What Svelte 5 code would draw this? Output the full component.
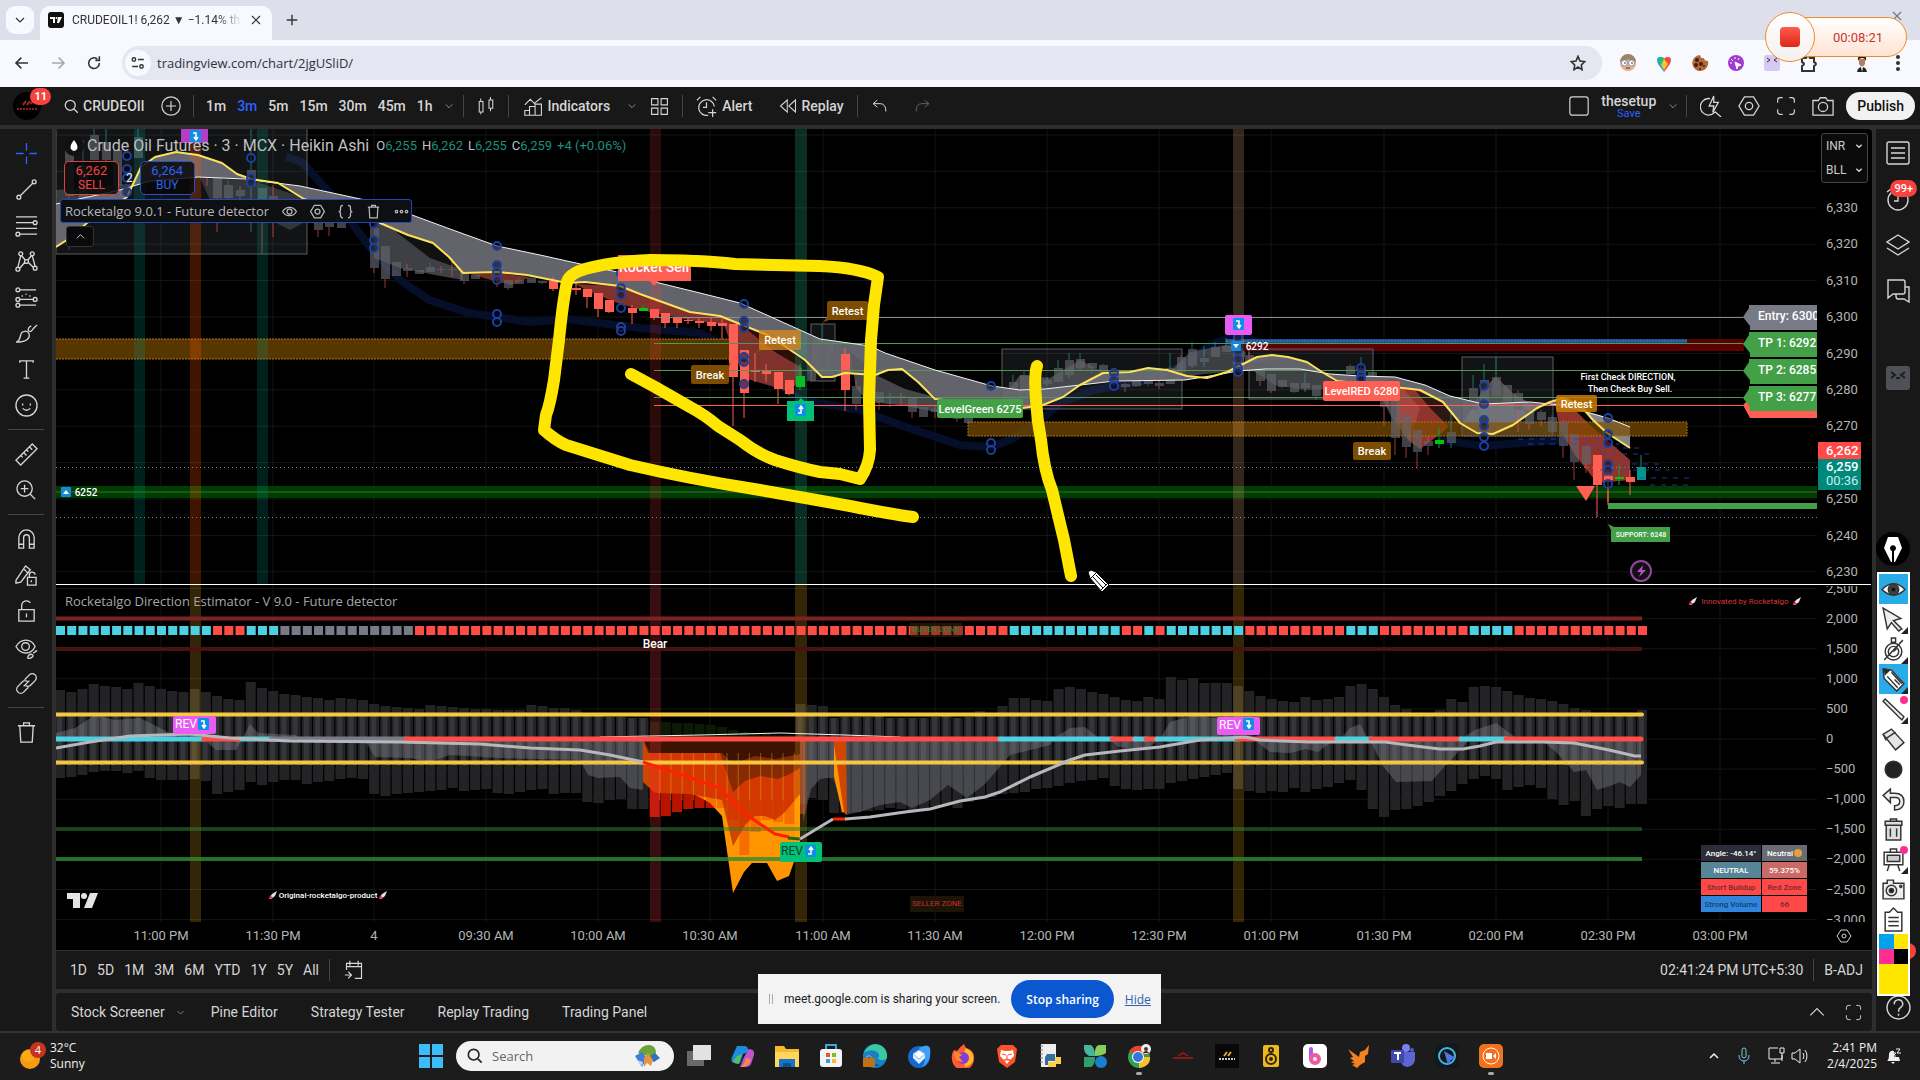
<script>
	const PITCH = 11.22;
	const barX = (k) => 60 + k * PITCH;

	const intervals = ['1m', '3m', '5m', '15m', '30m', '45m', '1h'];
	const ranges = ['1D', '5D', '1M', '3M', '6M', 'YTD', '1Y', '5Y', 'All'];
	const panels = ['Pine Editor', 'Strategy Tester', 'Replay Trading', 'Trading Panel'];

	// 24x24 outline icons
	const icons = {
		cross: 'M12 1v8M12 15v8M1 12h8M15 12h8',
		trend: 'M6 18L18 6M4 20m-2 0a2 2 0 1 0 4 0a2 2 0 1 0-4 0M20 4m-2 0a2 2 0 1 0 4 0a2 2 0 1 0-4 0',
		fib: 'M1 3h22M1 9h18M1 15h22M5 21h18M21 9m-2 0a2 2 0 1 0 4 0a2 2 0 1 0-4 0M3 21m-2 0a2 2 0 1 0 4 0a2 2 0 1 0-4 0',
		pattern: 'M3 18L6 6M7 6L11 11M13 11L17 6M18 6L21 17M5 19L10 13M14 13L19 18M6 4m-2 0a2 2 0 1 0 4 0a2 2 0 1 0-4 0M18 4m-2 0a2 2 0 1 0 4 0a2 2 0 1 0-4 0M3 20m-2 0a2 2 0 1 0 4 0a2 2 0 1 0-4 0M21 19m-2 0a2 2 0 1 0 4 0a2 2 0 1 0-4 0M12 12m-2 0a2 2 0 1 0 4 0a2 2 0 1 0-4 0',
		forecast: 'M5 4h17M5 14h14M5 20h17M3 4m-2 0a2 2 0 1 0 4 0a2 2 0 1 0-4 0M3 14m-2 0a2 2 0 1 0 4 0a2 2 0 1 0-4 0M3 20m-2 0a2 2 0 1 0 4 0a2 2 0 1 0-4 0M21 14m-2 0a2 2 0 1 0 4 0a2 2 0 1 0-4 0M7 11l1-1M11 9l1-1M15 10l1 1',
		brush: 'M1 21C7 21 4 10 9 10C14 8 17 14 13 18C10 21 6 21 1 21zM14 9C16 11 18 9 19 7L23 3M14 9C13 6 15 5 17 4',
		text: 'M5 5V3h14v2M12 3v18M9 21h6',
		smile: 'M12 12m-11 0a11 11 0 1 0 22 0a11 11 0 1 0-22 0M8 10v2M16 10v2M8 15q4 4 8 0',
		ruler: 'M1 18L18 1L23 6L6 23zM6 13l2 2M9 10l3 3M12 7l2 2M15 4l3 3',
		zoom: 'M10 10m-8 0a8 8 0 1 0 16 0a8 8 0 1 0-16 0M16 16l5 5M10 6v8M6 10h8',
		magnet: 'M4 21V10a8 8 0 0 1 16 0V21h-5V10a3 3 0 0 0-6 0V21zM4 17h5M15 17h5',
		penlock: 'M1 17L11 2L16 6L6 19L1 20zM9 5l4 4M13 14h9v8h-9zM15 14v-2a3 3 0 0 1 6-1M17 17v2',
		lock: 'M4 10h16v12H4zM7 10V6a5 5 0 0 1 9-3M12 14v4',
		eye: 'M1 11C6 2 17 2 21 11C17 20 6 20 1 11zM11 11m-4 0a4 4 0 1 0 8 0a4 4 0 1 0-8 0M13 23q1-4 4-4q3 1 1 3q-2 2-5 1M19 18l4-3',
		view: 'M1 12C6 3 18 3 23 12C18 21 6 21 1 12zM12 12m-4 0a4 4 0 1 0 8 0a4 4 0 1 0-8 0',
		link: 'M10 8L15 3a4 4 0 0 1 6 6L16 14a4 4 0 0 1-5 0M14 16L9 21a4 4 0 0 1-6-6L8 10a4 4 0 0 1 5 0M9 15l6-6',
		trash: 'M3 5h18M9 5V2h6v3M5 5l1 17h12l1-17',
		search: 'M10 10m-8 0a8 8 0 1 0 16 0a8 8 0 1 0-16 0M16 16l6 6',
		plus: 'M12 12m-11 0a11 11 0 1 0 22 0a11 11 0 1 0-22 0M12 6v12M6 12h12',
		candles: 'M3 6h5v14H3zM5 2v4M5 20v3M16 4h5v11h-5zM18 0v4M18 15v4',
		indicators: 'M1 10L8 3L13 8L22 1M1 23v-6h6v6zM7 23V12h7v11zM14 23V15M14 9h8v14h-8z',
		grid: 'M2 2h8v8H2zM14 2h8v8h-8zM2 14h8v8H2zM14 14h8v8h-8z',
		alarm: 'M14 22A9 9 0 1 1 21 12M12 7v6H8M1 5l4-4M19 1l4 4M19 15v9M14 19h9',
		replay: 'M11 4L2 12L11 20zM22 4L13 12L22 20z',
		undo: 'M9 3L3 8L9 13M3 8h10q8 0 8 11',
		redo: 'M15 3L21 8L15 13M21 8H11Q3 8 3 19',
		square: 'M4 1h16q3 0 3 3v16q0 3-3 3H4q-3 0-3-3V4q0-3 3-3z',
		quick: 'M16 19A9 9 0 1 1 11 4M16 18l7 6M15 1L10 12h5l-1 7L20 8h-5z',
		gear: 'M7 2h10l6 10l-6 10H7L1 12zM12 12m-4 0a4 4 0 1 0 8 0a4 4 0 1 0-8 0',
		full: 'M2 8V5q0-3 3-3h3M16 2h3q3 0 3 3v3M22 16v3q0 3-3 3h-3M8 22H5q-3 0-3-3v-3',
		camera: 'M1 6h6l2-3h6l2 3h6v16H1zM12 13m-5 0a5 5 0 1 0 10 0a5 5 0 1 0-10 0',
		down: 'M4 8l8 8l8-8',
		up: 'M4 16l8-8l8 8',
		code: 'M8 2Q4 2 4 6v3q0 3-3 3q3 0 3 3v3q0 4 4 4M16 2q4 0 4 4v3q0 3 3 3q-3 0-3 3v3q0 4-4 4',
		more: 'M4 12m-2 0a2 2 0 1 0 4 0a2 2 0 1 0-4 0M12 12m-2 0a2 2 0 1 0 4 0a2 2 0 1 0-4 0M20 12m-2 0a2 2 0 1 0 4 0a2 2 0 1 0-4 0',
		list: 'M3 1h18q2 0 2 2v18q0 2-2 2H3q-2 0-2-2V3q0-2 2-2zM5 7h14M5 12h14M5 17h14',
		clock: 'M12 13m-10 0a10 10 0 1 0 20 0a10 10 0 1 0-20 0M12 8v6H8M1 5l4-3',
		layers: 'M12 2L23 9L12 16L1 9zM1 15l11 7l11-7',
		chat: 'M2 1h15q2 0 2 2v10q0 2-2 2H7l-5 4zM19 8h4v15l-5-3h-6q-2 0-2-3v-2',
		calendar: 'M3 8h18M7 1v6M17 1v6M3 12V4h18v18H13M1 18h8M5 14l4 4l-4 4',
		help: 'M12 12m-11 0a11 11 0 1 0 22 0a11 11 0 1 0-22 0M8 9a4 4 0 1 1 6 3q-2 1-2 4M12 18v2',
		back: 'M21 12H3M11 4L3 12L11 20',
		forward: 'M3 12h18M13 4l8 8l-8 8',
		reload: 'M20 12a8 8 0 1 1-3-6M20 2v6h-6',
		star: 'M12 2l3 7l7 1l-5 5l1 7l-6-4l-6 4l1-7l-5-5l7-1z',
		close: 'M4 4l16 16M20 4L4 20',
		add: 'M12 3v18M3 12h18',
		tune: 'M2 6a3 3 0 1 0 6 0a3 3 0 1 0-6 0M12 6h10M2 18h10M15 18a3 3 0 1 0 6 0a3 3 0 1 0-6 0'
	};
	const drawTools = [
		['cross', 'trend', 'fib', 'pattern', 'forecast', 'brush', 'text', 'smile'],
		['ruler', 'zoom'],
		['magnet', 'penlock', 'lock', 'eye', 'link'],
		['trash']
	];
	const sideTools = ['list', 'clock', 'layers', 'chat'];

	const prices = [6330, 6320, 6310, 6300, 6290, 6280, 6270, 6250, 6240, 6230];
	const priceY = (p) => 207 + ((6330 - p) / 10) * 36.4;
	const rows = Array.from({ length: 13 }, (_, i) => 135 + i * 36.4);
	const levels = [2500, 2000, 1500, 1000, 500, 0, -500, -1000, -1500, -2000, -2500, -3000];
	const levelY = (v) => 739 - v * 0.0602;
	const times = [
		[161, '11:00 PM'], [273, '11:30 PM'], [374, '4'], [486, '09:30 AM'], [598, '10:00 AM'],
		[710, '10:30 AM'], [823, '11:00 AM'], [935, '11:30 AM'], [1047, '12:00 PM'], [1159, '12:30 PM'],
		[1271, '01:00 PM'], [1384, '01:30 PM'], [1496, '02:00 PM'], [1608, '02:30 PM'], [1720, '03:00 PM']
	];
	const fmt = (n) => (n < 0 ? '−' : '') + Math.abs(n).toLocaleString('en-US');

	// trend strip: colour and number of bars
	const runs = [
		['c', 14], ['r', 3], ['c', 3], ['g', 12], ['r', 53], ['c', 10], ['r', 2], ['c', 1], ['r', 1],
		['c', 7], ['r', 9], ['c', 3], ['r', 8], ['c', 4], ['r', 12]
	];
	const tone = { c: '#4dd0e1', r: '#ff4d45', g: '#787b86' };
	const strip = runs.flatMap(([c, n]) => Array(n).fill(tone[c]));
	const zero = [
		[56, 204, 'c'], [238, 271, 'c'], [271, 406, 'g'], [204, 238, 'r'], [406, 1000, 'r'],
		[1000, 1112, 'c'], [1112, 1135, 'r'], [1135, 1146, 'c'], [1146, 1157, 'r'], [1157, 1237, 'c'],
		[1237, 1337, 'r'], [1337, 1371, 'c'], [1371, 1461, 'r'], [1461, 1506, 'c'], [1506, 1641, 'r']
	];

	const tops = [
		690, 692, 689, 684, 686, 687, 689, 683, 686, 689, 691, 692, 689, 692, 696, 699, 700, 682, 688, 691,
		694, 695, 697, 698, 700, 698, 699, 700, 704, 706, 707, 708, 709, 705, 706, 707, 708, 709, 709, 710,
		710, 710, 705, 706, 708, 708, 710, 715, 716, 717, 717, 718, 718, 722, 722, 723, 723, 724, 725, 727,
		730, 732, 733, 734, 735, 735, 704, 705, 706, 718, 717, 717, 717, 716, 718, 718, 718, 718, 717, 716,
		718, 717, 711, 714, 706, 698, 698, 700, 701, 689, 687, 689, 692, 694, 697, 700, 701, 697, 699, 677,
		680, 678, 683, 683, 683, 686, 691, 696, 699, 701, 702, 697, 700, 699, 697, 686, 684, 689, 697, 705,
		709, 713, 713, 710, 699, 702, 687, 686, 687, 691, 695, 698, 699, 701, 704, 708, 710, 713, 713, 713,
		713, 710
	];
	const bottoms = [
		778, 777, 775, 772, 771, 771, 773, 771, 778, 780, 780, 780, 779, 781, 794, 792, 790, 782, 785, 782,
		780, 780, 784, 782, 781, 779, 778, 779, 794, 796, 794, 793, 792, 791, 790, 788, 791, 790, 789, 793,
		794, 792, 790, 789, 794, 793, 793, 802, 803, 800, 799, 809, 809, 817, 816, 812, 809, 808, 808, 808,
		820, 855, 832, 820, 822, 824, 804, 798, 800, 813, 813, 812, 811, 810, 808, 809, 810, 810, 806, 804,
		808, 802, 799, 797, 794, 793, 792, 789, 788, 786, 783, 781, 780, 778, 786, 789, 790, 789, 789, 783,
		781, 779, 777, 775, 773, 789, 791, 793, 791, 792, 788, 792, 789, 787, 783, 780, 790, 809, 817, 810,
		809, 806, 802, 796, 791, 784, 779, 776, 779, 790, 787, 785, 788, 799, 805, 801, 816, 809, 806, 808,
		804, 804
	];
	const isHot = (k) => k >= 53 && k <= 65;

	// x, body top, body bottom, wick top, wick bottom, colour
	const candles = [
		[69, 150, 196, 150, 250, 'g'], [83, 165, 202, 140, 202, 'g'], [94, 135, 160, 129, 160, 't'], [106, 142, 160, 129, 166, 't'],
		[117, 150, 186, 150, 198, 'g'], [138, 137, 158, 129, 158, 't'], [207, 172, 178, 172, 186, 'x'], [217, 175, 198, 175, 232, 'x'],
		[228, 185, 198, 180, 200, 'g'], [240, 190, 196, 186, 200, 't'], [251, 170, 186, 129, 232, 't'], [262, 188, 200, 188, 254, 'x'],
		[273, 196, 204, 185, 237, 'x'], [318, 222, 230, 222, 237, 'x'], [329, 222, 227, 222, 236, 'x'], [341, 218, 228, 216, 228, 'g'],
		[374, 228, 268, 225, 273, 'x'], [385, 246, 279, 246, 288, 'x'], [396, 262, 276, 262, 276, 'g'], [407, 268, 271, 264, 277, 'x'],
		[419, 270, 274, 270, 274, 'g'], [430, 267, 272, 262, 272, 'g'], [441, 269, 270, 266, 273, 'x'], [452, 269, 270, 260, 277, 'x'],
		[464, 272, 281, 270, 284, 'x'], [475, 275, 279, 275, 279, 'g'], [497, 278, 280, 276, 287, 'x'], [508, 280, 288, 280, 290, 'x'],
		[519, 280, 284, 278, 284, 'g'], [531, 278, 283, 272, 283, 't'], [542, 281, 283, 281, 284, 'x'],
		[553, 281, 289, 277, 291, 'r'], [576, 288, 290, 283, 295, 'r'], [587, 289, 297, 289, 308, 'r'], [598, 293, 309, 293, 317, 'r'],
		[609, 300, 312, 300, 313, 'r'], [632, 308, 313, 305, 324, 'r'], [643, 308, 311, 305, 311, 'n'], [654, 309, 318, 309, 320, 'r'],
		[665, 313, 323, 313, 328, 'r'], [677, 318, 323, 318, 328, 'r'], [688, 320, 321, 317, 324, 'r'], [699, 321, 323, 318, 328, 'r'],
		[711, 322, 326, 318, 331, 'r'], [722, 323, 326, 319, 339, 'r'], [733, 324, 377, 324, 426, 'r'], [744, 350, 393, 350, 418, 'r'],
		[755, 371, 372, 353, 382, 'r'], [766, 371, 374, 364, 382, 'r'], [778, 372, 389, 372, 404, 'r'], [789, 380, 394, 380, 395, 'r'],
		[800, 376, 387, 364, 390, 'n'], [811, 360, 381, 350, 382, 'g'], [822, 344, 368, 324, 368, 't'], [833, 350, 370, 345, 372, 'g'],
		[845, 354, 390, 348, 411, 'r'], [856, 386, 404, 380, 410, 'x'], [879, 392, 402, 392, 410, 'x'], [890, 396, 398, 393, 407, 't'],
		[901, 396, 398, 393, 404, 'x'], [912, 398, 412, 398, 418, 'x'], [923, 407, 417, 407, 417, 'g'], [935, 409, 412, 405, 418, 'x'],
		[957, 416, 419, 415, 422, 'x'], [968, 417, 423, 417, 423, 'g'], [1013, 382, 398, 375, 400, 't'], [1024, 375, 392, 370, 395, 'g'],
		[1047, 380, 384, 377, 386, 't'], [1058, 368, 382, 360, 382, 't'], [1069, 360, 375, 353, 378, 't'], [1080, 359, 368, 353, 370, 't'],
		[1092, 363, 368, 363, 374, 'g'], [1103, 365, 372, 364, 375, 't'], [1114, 374, 382, 374, 386, 'g'], [1125, 384, 387, 383, 392, 'x'],
		[1136, 380, 386, 380, 387, 'g'], [1148, 381, 384, 380, 386, 'g'], [1159, 383, 386, 381, 389, 'x'], [1170, 368, 384, 353, 384, 't'],
		[1181, 357, 372, 355, 376, 'g'], [1192, 349, 366, 342, 368, 't'], [1204, 358, 362, 346, 367, 't'], [1215, 347, 357, 342, 357, 't'],
		[1226, 346, 352, 338, 352, 't'], [1249, 355, 366, 352, 368, 'x'], [1260, 368, 381, 368, 386, 'x'], [1271, 374, 391, 374, 393, 'x'],
		[1282, 380, 387, 380, 388, 'x'], [1294, 383, 392, 383, 393, 'g'], [1305, 383, 388, 373, 392, 't'], [1316, 385, 396, 385, 400, 't'],
		[1350, 366, 374, 364, 376, 'g'], [1361, 368, 380, 357, 382, 't'], [1372, 372, 382, 372, 384, 'g'], [1384, 395, 407, 395, 426, 'x'],
		[1395, 400, 438, 400, 455, 'x'], [1406, 415, 447, 415, 458, 'x'], [1417, 430, 452, 430, 469, 'x'], [1428, 441, 446, 437, 455, 'x'],
		[1439, 440, 444, 428, 448, 'n'], [1451, 432, 443, 412, 448, 't'], [1473, 388, 410, 375, 412, 't'], [1484, 380, 405, 364, 420, 't'],
		[1496, 377, 396, 357, 396, 't'], [1507, 385, 402, 385, 404, 'g'], [1518, 393, 410, 390, 432, 'x'], [1529, 410, 424, 405, 430, 'x'],
		[1541, 412, 420, 410, 426, 'x'], [1552, 417, 432, 415, 433, 'g'], [1563, 422, 446, 420, 458, 'x'], [1574, 434, 462, 434, 480, 'x'],
		[1586, 446, 464, 446, 473, 'x'], [1597, 455, 485, 455, 517, 'r'], [1608, 476, 480, 470, 502, 'r'], [1619, 477, 479, 465, 485, 'n'],
		[1630, 477, 482, 470, 495, 'r'], [1641, 467, 480, 455, 480, 'b']
	];
	const body = { g: '#64666d', x: '#64666d', t: '#64666d', r: '#ff5f52', n: '#00c805', b: '#00968a' };
	const wick = { g: '#64666d', x: '#f0544a', t: '#26a69a', r: '#ff5f52', n: '#00a843', b: '#00968a' };
	const dim = (c) => (c === 'g' || c === 'x' || c === 't' ? 0.65 : 1);

	const white = '56,204 120,190 150,181 198,177 245,179 300,186 365,200 412,215 450,229 497,246 540,255 585,265 622,273 655,282 700,293 740,303 780,321 820,339 870,346 885,353 935,370 960,377 992,386 1020,390 1045,389 1080,385 1115,381 1185,380 1210,376 1238,371 1265,369 1300,369 1330,374 1360,376 1395,377 1425,385 1450,396 1483,404 1530,402 1560,405 1608,418 1630,427';
	const yellow = '56,247 70,238 87,223 127,197 141,167 155,157 176,152 198,155 222,163 237,174 251,179 278,183 304,199 380,223 408,235 433,243 449,257 463,273 497,272 527,275 567,283 585,282 620,286 640,294 665,303 690,312 720,316 735,322 765,334 783,345 805,360 822,377 832,377 845,373 875,375 888,370 902,369 918,382 935,399 990,405 1023,408 1043,405 1063,397 1080,385 1103,373 1130,372 1148,368 1167,370 1187,376 1207,378 1227,372 1243,364 1257,357 1272,355 1288,357 1307,362 1322,372 1337,381 1403,388 1420,390 1443,402 1460,423 1477,433 1493,434 1513,425 1537,408 1550,402 1563,398 1580,405 1593,420 1607,433 1630,448';
	const cloud = white + ' ' + yellow.split(' ').reverse().join(' ');

	const pivots = [
		[127, [156, 169, 178, 192]], [251, [158, 178, 183]], [374, [224, 240, 248]], [497, [246, 265, 272, 280, 314, 322]],
		[621, [273, 288, 295, 308, 327, 331]], [744, [304, 321, 328, 357, 362, 384]], [991, [386, 443, 450]],
		[1114, [373, 380, 386]], [1238, [332, 337, 351, 359, 368, 372]], [1361, [368, 376, 379]],
		[1484, [386, 404, 420, 426, 437, 446]], [1608, [418, 434, 443, 464, 470, 484]]
	];
	const targets = [
		[317, 'Entry: 6300', '#787b86'], [344, 'TP 1: 6292.', '#43a047'],
		[371, 'TP 2: 6285.', '#43a047'], [398, 'TP 3: 6277.', '#43a047']
	];
	const tags = [
		[827, 301, 41, 19, 'Retest', '#7c4c00', 1], [759, 330, 42, 20, 'Retest', '#d98a1c', 0.75], [691, 365, 38, 19, 'Break', '#7c4c00', 1],
		[1353, 442, 38, 18, 'Break', '#7c4c00', 1], [1556, 395, 41, 17, 'Retest', '#c77a00', 0.85],
		[937, 399, 86, 19, 'LevelGreen 6275', '#43a047', 1], [1323, 381, 77, 20, 'LevelRED 6280', '#ff5f52', 1]
	];
	const signal = '845,819 870,817 905,812 930,809 960,801 985,797 1000,792 1030,777 1070,760 1085,755 1120,751 1160,747 1200,740 1245,737 1260,740 1310,742 1385,742 1415,746 1440,749 1463,749 1480,746 1496,742 1543,742 1574,743 1609,750 1635,756 1641,756';
</script>

{#snippet icon(name, size = 20)}
	<svg class="icon" width={size} height={size} viewBox="0 0 24 24"><path d={icons[name]} /></svg>
{/snippet}

{#snippet turn(x, y, up)}
	<g transform="translate({x} {y})">
		<rect width="11" height="12" rx="1" fill="#0d8fe8" />
		<path d={up ? 'M3 9H6V3M4 5L6 2L8 5' : 'M3 3H6V9M4 7L6 10L8 7'} fill="none" stroke="#fff" stroke-width="1.5" />
	</g>
{/snippet}

{#snippet rocket(x, y)}
	<g transform="translate({x} {y})">
		<path d="M0 8L3 3L8 0L6 5L2 8z" fill="#e9dfe4" />
		<path d="M0 8L1 4L4 7z" fill="#e0294b" />
	</g>
{/snippet}

<div class="screen">
	<header class="chrome">
		<div class="tabs">
			<button class="tab-menu" aria-label="Search tabs">{@render icon('down', 12)}</button>
			<div class="tab">
				<svg width="16" height="16" viewBox="0 0 16 16"><rect width="16" height="16" rx="3" fill="#111" /><path d="M2 5h5v6H5V7H2zM10 5h4l-3 6H9z" fill="#fff" /><circle cx="8.500" cy="6" r="1" fill="#fff" /></svg>
				<span class="tab-title">CRUDEOIL1! 6,262 ▼ −1.14% th</span>
				<button aria-label="Close tab">{@render icon('close', 12)}</button>
			</div>
			<button class="new-tab" aria-label="New tab">{@render icon('add', 14)}</button>
			<span class="window-x">{@render icon('close', 12)}</span>
		</div>
		<div class="nav">
			<button aria-label="Back">{@render icon('back', 16)}</button>
			<button class="faded" aria-label="Forward">{@render icon('forward', 16)}</button>
			<button aria-label="Reload">{@render icon('reload', 16)}</button>
			<div class="omnibox">
				<span class="site">{@render icon('tune', 14)}</span>
				<input type="text" aria-label="Address" value="tradingview.com/chart/2jgUSliD/" />
				<button aria-label="Bookmark">{@render icon('star', 16)}</button>
			</div>
			<div class="extensions">
				<button aria-label="Extension"><svg width="18" height="18" viewBox="0 0 18 18"><circle cx="9" cy="9" r="8" fill="#e3b08d" /><path d="M1 8a8 8 0 0 1 16 0q-8-5-16 0" fill="#9c8468" /><circle cx="5.500" cy="9" r="3" fill="#fff" stroke="#8496a8" /><circle cx="12.500" cy="9" r="3" fill="#fff" stroke="#8496a8" /><path d="M5 9h2M12 9h2M7 14h4" stroke="#533" /></svg></button>
				<button aria-label="Extension"><svg width="18" height="18" viewBox="0 0 18 18"><path d="M9 18L3 10Q0 2 6 3q2 0 3 2z" fill="#16a9e8" /><path d="M9 18l6-8q3-8-3-7q-2 0-3 2z" fill="#f0484b" /><path d="M6 3q3 0 3 2l-3 6l-3-2q-1-4 3-6" fill="#1fbf7a" /><path d="M9 5l4 5l-4 6l-3-5z" fill="#f8c52c" /></svg></button>
				<button aria-label="Extension"><svg width="18" height="18" viewBox="0 0 18 18"><path d="M9 1q1 4 4 3q0 3 4 3A8 8 0 1 1 9 1" fill="#b3693a" /><g fill="#4a1e0c"><circle cx="6" cy="6" r="2" /><circle cx="5" cy="11" r="2" /><circle cx="10" cy="10" r="2" /><circle cx="13" cy="12" r="1" /><circle cx="9" cy="15" r="1" /></g></svg></button>
				<button aria-label="Extension"><svg width="18" height="18" viewBox="0 0 18 18"><circle cx="9" cy="9" r="8" fill="#a23ad0" /><path d="M8 8l6 3l-3 1l-1 3zM8 3v2M4 5l2 2M12 4l-1 2M3 9h2" fill="#fff" stroke="#fff" /></svg></button>
				<button aria-label="Extension"><svg width="18" height="18" viewBox="0 0 18 18"><rect x="1" y="1" width="16" height="16" rx="2" fill="#d6c9f2" /><path d="M4 4l3 2l-3 2M14 4l-3 2l3 2" fill="none" stroke="#333" /></svg></button>
				<button aria-label="Extensions"><svg width="18" height="18" viewBox="0 0 18 18"><path d="M3 4h4q2-4 4 0h4v4q4 2 0 4v5H3v-5q4-2 0-4z" fill="none" stroke="#333" stroke-width="2" /></svg></button>
				<button aria-label="Profile"><svg width="18" height="18" viewBox="0 0 18 18"><path d="M4 18q1-5 5-5q4 0 5 5z" fill="#222" /><path d="M8 13h2l-1 5z" fill="#fff" /><path d="M6 5h6v5q-3 5-6 0z" fill="#b57f5f" /><path d="M5 7q-1-6 4-6q5 0 4 6q-1-3-4-3q-3 0-4 3" fill="#161616" /></svg></button>
				<button aria-label="Menu"><svg width="18" height="18" viewBox="0 0 18 18" fill="#333"><circle cx="9" cy="3" r="2" /><circle cx="9" cy="9" r="2" /><circle cx="9" cy="15" r="2" /></svg></button>
			</div>
		</div>
		<div class="recorder">
			<button aria-label="Stop recording"><span></span></button>
			<time>00:08:21</time>
		</div>
	</header>

	<div class="tv">
		<div class="bar top">
			<button class="logo" aria-label="Account">
				<svg width="28" height="28" viewBox="0 0 28 28"><circle cx="14" cy="14" r="14" fill="#000" /><path d="M10 13l3-4M14 13l3-4M18 12l1-2" stroke="#b3261d" stroke-width="2" /><path d="M4 17h20" stroke="#8a1d17" stroke-width="2" stroke-dasharray="2 1" /></svg>
				<span class="badge">11</span>
			</button>
			<button class="strong symbol">{@render icon('search', 15)}CRUDEOIl</button>
			<button class="compare" aria-label="Compare">{@render icon('plus', 20)}</button>
			<i class="rule"></i>
			<div class="intervals">
				{#each intervals as t}
					<button class="strong" class:active={t === '3m'}>{t}</button>
				{/each}
				<button aria-label="More intervals">{@render icon('down', 10)}</button>
			</div>
			<i class="rule"></i>
			<button class="wide" aria-label="Bar style">{@render icon('candles', 18)}</button>
			<i class="rule"></i>
			<button class="strong wide studies">{@render icon('indicators', 19)}Indicators</button>
			<button class="more" aria-label="Favourite indicators">{@render icon('down', 10)}</button>
			<button class="wide" aria-label="Templates">{@render icon('grid', 19)}</button>
			<i class="rule"></i>
			<button class="strong wide">{@render icon('alarm', 21)}Alert</button>
			<button class="strong wide">{@render icon('replay', 18)}Replay</button>
			<i class="rule"></i>
			<button class="wide" aria-label="Undo">{@render icon('undo', 17)}</button>
			<button class="wide faded" aria-label="Redo">{@render icon('redo', 17)}</button>
			<div class="right">
				<div class="layout">
					<button aria-label="Layout">{@render icon('square', 20)}</button>
					<button class="strong name">thesetup<small>Save</small></button>
					<button aria-label="Layouts">{@render icon('down', 10)}</button>
				</div>
				<i class="rule"></i>
				<button aria-label="Quick search">{@render icon('quick', 22)}</button>
				<button aria-label="Settings">{@render icon('gear', 22)}</button>
				<button aria-label="Full screen">{@render icon('full', 20)}</button>
				<button aria-label="Snapshot">{@render icon('camera', 22)}</button>
				<button class="publish">Publish</button>
			</div>
		</div>

		<div class="workspace">
			<nav class="draw">
				{#each drawTools as group, i}
					{#if i}<hr />{/if}
					{#each group as name}
						<button class:active={name === 'cross'} aria-label={name}>{@render icon(name, 23)}</button>
					{/each}
				{/each}
			</nav>

			<main>
				<section class="chart">
					<svg class="plot" width="100%" height="100%">
						<defs>
							<clipPath id="area"><rect x="56" y="129" width="1761" height="793" /></clipPath>
							<clipPath id="upper"><rect x="56" y="129" width="1761" height="455" /></clipPath>
							<clipPath id="axis"><rect x="1817" y="586" width="60" height="336" /></clipPath>
						</defs>
						<g transform="translate(-56 -129)">
							<g stroke="#151515">
								{#each rows as y}<path d="M56 {y}H1817" />{/each}
								{#each levels as v}<path d="M56 {levelY(v)}H1817" />{/each}
								{#each times as [x]}<path d="M{x} 129V922" />{/each}
							</g>

							<g clip-path="url(#upper)">
								<path d="M286 157L302 162L327 190L372 250L400 280L429 300L469 313L497 317L530 322L567 319L640 328L700 333L744 358L800 400L860 410L900 425L960 445L991 447L1010 440L1037 423L1060 403L1093 390L1140 382L1185 365L1210 345L1238 335L1265 345" class="under" />
								<path d="M1440 440L1484 446L1560 440" class="under" />
								<rect x="56" y="120" width="251" height="134" class="zone" />
								<polygon points="56,190 56,247 87,223 127,197 141,167 155,157 198,155 198,178 150,182" fill="#77787f" opacity=".4" />
								<polygon points="200,178 250,180 305,198 305,222 290,230 250,210 210,200" fill="#5f6066" opacity=".45" />
								<polygon points={cloud} fill="#6b6b74" opacity=".92" />
								<polygon points="374,215 380,223 408,235 433,243 449,257 463,273 463,280 440,276 400,268 374,258" fill="#3f4045" />
								<polygon points="395,231 433,243 449,257 458,268 430,258" fill="#111" />
								<polygon points="470,274 497,273 530,277 512,285 498,282" fill="#73302a" />
								<polygon points="575,284 620,286 640,294 665,303 690,312 720,316 735,322 765,334 783,345 802,362 802,376 790,392 778,388 744,378 733,350 724,325 690,320 650,312 620,304 590,292" fill="#7f322c" />
								<polygon points="740,324 765,334 783,345 802,362 802,368 775,352" fill="#2a0e0a" />
								<polygon points="850,352 880,375 930,395 950,412 968,418 900,405 868,402 856,388" fill="#57585e" opacity=".8" />
								<polygon points="878,376 888,370 902,369 918,382 935,397 905,389" fill="#0c0c0c" />
								<polygon points="1003,398 1020,375 1050,378 1080,360 1103,372 1080,385 1045,389" fill="#66676e" opacity=".6" />
								<polygon points="1170,372 1190,352 1230,344 1246,352 1243,364 1225,372 1187,376" fill="#66676e" opacity=".6" />
								<polygon points="1243,364 1290,358 1325,372 1340,388 1305,390 1275,385" fill="#595a60" opacity=".6" />
								<polygon points="1375,384 1395,377 1403,388 1420,408 1410,440 1395,424" fill="#5d5e64" opacity=".8" />
								<polygon points="1398,386 1420,390 1443,402 1455,420 1443,432 1420,449 1408,440 1396,420" fill="#c0443a" opacity=".75" />
								<polygon points="1415,390 1443,402 1460,423 1450,428 1430,408" fill="#15100c" opacity=".8" />
								<polygon points="1462,425 1484,388 1496,377 1515,395 1540,408 1513,425 1493,434 1477,433" fill="#77797f" opacity=".6" />
								<polygon points="1555,404 1563,398 1590,425 1607,440 1630,460 1630,480 1597,483 1575,455 1560,430" fill="#c0443a" opacity=".75" />
								<polygon points="1563,404 1608,418 1630,427 1630,448 1607,433 1593,420 1580,405" fill="#85858c" />

								<rect x="56" y="339" width="678" height="20" fill="#583600" />
								<path d="M56 339H734M56 359H734" class="dash" />
								<rect x="968" y="422" width="719" height="14" fill="#7c4c00" opacity=".72" />
								<path d="M968 422H1687V436H968z" class="dash" />
								<rect x="1244" y="339" width="500" height="12" fill="#5c0000" />
								<rect x="1226" y="339" width="461" height="4" fill="#1c4f8c" />
								<path d="M1226 341H1687" stroke="#4c82bd" stroke-dasharray="2 1" />
								<rect x="56" y="486" width="1761" height="12" fill="#003d00" />
								<path d="M56 492H1817" stroke="#1a561c" stroke-width="2" />
								<path d="M56 467.500H1817M56 517.500H1817" stroke="#76877d" stroke-dasharray="1 3" />

								<g fill="none" stroke="#62656d">
									<rect x="1002" y="349" width="180" height="60" class="zone" />
									<rect x="1249" y="349" width="124" height="50" class="zone" />
									<rect x="1462" y="357" width="91" height="79" class="zone" />
									<rect x="811" y="324" width="24" height="57" class="zone" />
								</g>

								{#each candles as [x, a, b, c, d, k]}
									<g opacity={dim(k)}>
										<path d="M{x} {c}V{d}" stroke={wick[k]} />
										<rect x={x - 4} y={a} width="9" height={b - a} fill={body[k]} />
									</g>
								{/each}

								<g fill="none">
									<path d="M654 317.500H1743" stroke="#8b8d94" />
									<path d="M654 343.500H1743M654 370.500H1743M654 397.500H1743" stroke="#549656" />
									<path d="M654 405.500H1743" stroke="#ff5f52" />
								</g>
								<rect x="134" y="129" width="11" height="455" fill="#00a08c" opacity=".2" />
								<rect x="190" y="129" width="11" height="455" fill="#ff5500" opacity=".25" />
								<rect x="257" y="129" width="11" height="455" fill="#00a08c" opacity=".2" />
								<rect x="650" y="129" width="11" height="455" fill="#ff3b3b" opacity=".17" />
								<rect x="795" y="129" width="12" height="455" fill="#26a682" opacity=".28" />
								<rect x="1233" y="129" width="11" height="455" fill="#ffc080" opacity=".2" />
								<polyline points={white} fill="none" stroke="#f2f2f2" />
								<polyline points={yellow} fill="none" stroke="#fbe25a" stroke-width="2" stroke-linejoin="round" />

								<g stroke="#2947c8" stroke-dasharray="5 6" opacity=".75">
									<path d="M1518 439H1610M1528 444H1620M1590 448H1640M1600 454H1655M1610 464H1660M1600 470H1670M1640 478H1690M1650 485H1690" />
								</g>
								{#each pivots as [x, ys]}
									{#each ys as y}<circle cx={x} cy={y} r="4" fill="#02040a" fill-opacity=".5" stroke="#1d3f9e" stroke-width="2" />{/each}
								{/each}

								<path d="M618 255H691V281H658L654 286L650 281H618z" fill="#ff5f52" />
								<text x="654" y="272" class="tag large">Rocket Sell</text>
								<path d="M822 324L826 318H834L824 322zM755 353L760 348H770zM731 362L726 368H729z" fill="#7c4c00" />
								{#each tags as [x, y, w, h, label, fill, opacity]}
									<rect {x} {y} width={w} height={h} rx="2" {fill} {opacity} />
									<text x={x + w / 2} y={y + h / 2 + 4} class="tag">{label}</text>
								{/each}
								<path d="M787 401H798L801 398L804 401H814V421H787z" fill="#00c176" />
								{@render turn(795, 404, true)}
								<rect x="1225" y="315" width="27" height="20" rx="2" fill="#e85cf5" />
								{@render turn(1233, 318, false)}
								<rect x="181" y="129" width="27" height="14" fill="#b13ec4" />
								{@render turn(190, 130, false)}
								<rect x="1231" y="341" width="10" height="10" rx="1" fill="#1687d9" /><path d="M1233 344H1239L1236 348z" fill="#fff" />
								<text x="1257" y="350" class="tag small">6292</text>
								<rect x="61" y="487" width="10" height="10" rx="1" fill="#1687d9" /><path d="M63 494H69L66 490z" fill="#fff" />
								<text x="86" y="496" class="tag small">6252</text>
								<text x="1628" y="380" class="tag note">First Check DIRECTION,</text>
								<text x="1630" y="392" class="tag note">Then Check Buy Sell.</text>
								<path d="M1576 486H1595L1586 501z" fill="#ff5f52" />
								<path d="M1608 490V505" stroke="#ff5f52" />
								<rect x="1608" y="503" width="209" height="6" fill="#43a047" />
								<path d="M1608 524L1614 527H1670V542H1611V530z" fill="#43a047" />
								<text x="1641" y="537" class="tag tiny">SUPPORT: 6248</text>
								<circle cx="1641" cy="571" r="10" fill="#170d1a" stroke="#8f4a9c" stroke-width="2" />
								<path d="M1643 565L1637 572H1641L1639 577L1646 570H1642z" fill="#a95ab8" />

								<path d="M1743 405L1750 398H1817V418H1750z" fill="#ff5f52" />
								{#each targets as [y, label, fill]}
									<path d="M1743 {y}L1749 {y - 9}V{y - 12}H1817V{y + 13}H1750V{y + 9}z" {fill} />
									<text x="1758" y={y + 3} class="target">{label}</text>
								{/each}
							</g>

							<g clip-path="url(#area)">
								{#each tops as top, k}
									<rect x={barX(k) - 5} y={top} width="10" height={739 - top} fill={isHot(k) ? '#0c1a05' : '#232326'} />
									<rect x={barX(k) - 5} y="739" width="10" height={bottoms[k] - 739} fill={isHot(k) ? '#a81000' : '#232326'} />
									{#if !isHot(k)}<rect x={barX(k) - 3} y={Math.max(top, 716)} width="5" height="46" fill="#3a3b40" opacity=".8" />{/if}
								{/each}
								<g fill="#85878f" opacity=".38">
									<polygon points="56,733 75,728 95,715 115,720 140,718 170,733 180,739 56,739" />
									<polygon points="56,736 80,730 140,728 170,737 56,739" />
									<polygon points="204,739 216,750 236,750 242,739" />
									<polygon points="242,739 250,724 258,733 296,735 300,739" />
									<polygon points="364,739 375,757 410,758 430,762 450,755 500,758 580,760 588,775 598,778 620,777 630,788 643,790 643,739" />
									<polygon points="364,739 378,750 420,752 500,750 580,757 610,763 643,770 643,739" />
									<polygon points="803,739 803,822 812,785 820,778 833,778 846,815 860,812 880,805 900,802 912,808 930,800 948,785 967,798 985,784 1010,755 1050,745 1054,739" />
									<polygon points="803,739 810,790 820,779 834,777 846,805 860,792 880,786 900,785 912,792 925,788 948,779 967,786 985,778 1005,752 1030,739" />
									<polygon points="803,739 806,760 820,750 850,762 900,748 950,754 985,751 1010,745 1020,739" />
									<polygon points="1053,739 1070,728 1085,727 1100,739" />
									<polygon points="1110,739 1118,747 1145,750 1160,739" />
									<polygon points="1160,739 1170,722 1195,715 1225,720 1240,739" />
									<polygon points="1253,739 1270,752 1290,753 1306,749 1318,752 1335,739" />
									<polygon points="1340,739 1350,728 1360,724 1368,739" />
									<polygon points="1370,739 1382,765 1396,782 1432,781 1446,765 1462,748 1470,739" />
									<polygon points="1378,739 1390,752 1420,760 1440,760 1455,745 1462,739" />
									<polygon points="1461,739 1475,730 1496,723 1515,737 1520,739" />
									<polygon points="1540,739 1556,752 1574,772 1586,770 1597,790 1610,786 1620,782 1630,787 1641,775 1641,739" />
									<polygon points="1560,739 1580,752 1600,762 1620,764 1641,762 1641,739" />
								</g>
								<polygon points="643,739 643,780 655,790 690,792 710,803 722,816 733,893 744,872 752,863 767,863 777,881 789,876 800,845 800,739" fill="#ff9500" />
								<polygon points="643,739 643,782 655,793 690,794 722,800 733,846 745,825 755,816 765,816 775,820 785,812 800,794 800,739" fill="#cf4600" />
								<g fill="#e01b00" opacity=".3">
									{#each bottoms as b, k}
										{#if isHot(k)}<rect x={barX(k) - 5} y="739" width="10" height={b - 739} />{/if}
									{/each}
								</g>
								<polygon points="643,739 648,753 720,753 733,792 745,781 760,776 778,779 790,774 800,768 800,739" fill="#862a04" />
								<polygon points="643,739 650,753 722,753 733,764 755,756 775,759 800,754 800,739" fill="#3c1202" />
								<g stroke="#e8a317" opacity=".45">
									{#each bottoms as b, k}
										{#if isHot(k)}<path d="M{barX(k) + 5} 753V800" />{/if}
									{/each}
								</g>
								<rect x="800" y="739" width="5" height="75" fill="#c23a30" opacity=".6" />
								<polygon points="834,739 846,739 847,815 843,812 834,776" fill="#cf4600" />
								<polygon points="834,745 844,812 842,812 834,776" fill="#ff9500" />
								<rect x="190" y="584" width="11" height="338" fill="#ffb81f" opacity=".2" />
								<rect x="650" y="584" width="11" height="338" fill="#ff3b48" opacity=".22" />
								<rect x="795" y="584" width="12" height="338" fill="#ffb81f" opacity=".2" />
								<rect x="1233" y="584" width="11" height="338" fill="#ffb81f" opacity=".2" />

								<g stroke-width="4" fill="none">
									<path d="M56 618.500H1642" stroke="#7d2422" />
									<path d="M56 649H1642" stroke="#481412" />
									<path d="M56 829H1642" stroke="#2e7d32" opacity=".5" />
									<path d="M56 859H1642" stroke="#2e8b32" opacity=".8" />
									<path d="M56 714.500H1642M56 762.500H1642" stroke="#f7c83f" stroke-linecap="round" />
									<path d="M56 764H650M1080 764H1640" stroke="#c7a950" stroke-width="1" stroke-dasharray="4 7" />
								</g>
								<path d="M600 737L700 735L780 733L845 735L900 737" stroke="#f4f4f4" fill="none" />
								<g stroke-width="5" stroke-linecap="round">
									{#each zero as [a, b, c]}<path d="M{a} 739H{b}" stroke={tone[c]} />{/each}
								</g>
								<g fill="none" stroke-width="3" stroke-linejoin="round">
									<polyline points="56,748 90,742 130,736 190,734 230,738 290,741 400,742 480,744 530,748 580,750 610,755 643,762" stroke="#b7b8bb" />
									<polyline points="643,762 685,776 720,788 740,810 760,824 775,834 789,837" stroke="#ff2200" />
									<path d="M788 838L800 839" stroke="#176b14" />
									<path d="M800 839L833 819" stroke="#b7b8bb" />
									<path d="M833 819H846" stroke="#ff2200" />
									<polyline points={signal} stroke="#b7b8bb" />
								</g>
								{#each strip as fill, k}<rect x={barX(k) - 4} y="626" width="9" height="9" {fill} />{/each}

								<text x="655" y="648" class="tag medium">Bear</text>
								<rect x="910" y="623" width="52" height="14" fill="#3a2a10" opacity=".5" />
								<text x="936" y="632" class="zone-text" fill="#1f8a30">BUYER ZONE</text>
								<rect x="910" y="896" width="54" height="16" fill="#1d1408" />
								<text x="937" y="906" class="zone-text" fill="#c23229">SELLER ZONE</text>

								<rect x="173" y="716" width="43" height="18" rx="2" fill="#e85cf5" />
								<text x="186" y="728" class="rev">REV</text>
								{@render turn(198, 718, false)}
								<rect x="1217" y="717" width="43" height="18" rx="2" fill="#e85cf5" />
								<text x="1230" y="729" class="rev">REV</text>
								{@render turn(1243, 718, false)}
								<rect x="780" y="842" width="42" height="20" rx="2" fill="#00c176" />
								<text x="792" y="855" class="rev up">REV</text>
								{@render turn(805, 845, true)}

								<g fill="#e4e4e4"><path d="M67 893H80V908H73V899H67z" /><circle cx="84" cy="896" r="3" /><path d="M90 893H98L92 908H84z" /></g>
								{@render rocket(269, 891)}
								<text x="328" y="898" class="tag product">Original-rocketalgo-product</text>
								{@render rocket(379, 891)}
								{@render rocket(1689, 597)}
								<text x="1745" y="604" class="zone-text" fill="#d9383f">Innovated by Rocketalgo</text>
								{@render rocket(1793, 597)}
							</g>

							<path d="M56 584.500H1871" stroke="#fff" />
							<g class="axis">
								{#each prices as p}<text x="1826" y={priceY(p) + 5}>{fmt(p)}</text>{/each}
								<g clip-path="url(#axis)">
									{#each levels as v}<text x="1826" y={levelY(v) + 4}>{fmt(v)}</text>{/each}
								</g>
								{#each times as [x, label]}<text {x} y="940" text-anchor="middle">{label}</text>{/each}
								<rect x="1818" y="442" width="43" height="17" fill="#ff4a49" />
								<rect x="1818" y="459" width="43" height="31" fill="#00897b" />
								<text x="1826" y="455" class="now">6,262</text>
								<text x="1826" y="471" class="now">6,259</text>
								<text x="1826" y="485" class="left">00:36</text>
								<path d="M1841 930H1847L1851 936L1847 942H1841L1837 936z" fill="none" stroke="#d5d5d5" />
								<circle cx="1844" cy="936" r="2" fill="none" stroke="#d5d5d5" />
							</g>

							<g fill="none" stroke="#ffe600" stroke-width="12" stroke-linecap="round" stroke-linejoin="round">
								<path d="M631 374L655 387L690 407Q705 415 718 426L740 440Q758 454 775 460Q800 468 820 472L840 474L860 479Q869 466 870 450L869 400L871 340L874 305L878 277Q860 268 820 266L735 264Q700 260 650 260Q610 262 585 269Q569 274 567 282Q563 300 559 340L554 380Q550 405 546 415L544 430Q555 440 566 445L630 465Q690 479 760 490L850 506Q890 514 913 517" />
								<path d="M1037 366Q1034 375 1036 400Q1037 420 1041 440Q1044 470 1052 490L1064 540L1071 576" />
							</g>
							<g transform="translate(1087 569)">
								<path d="M1 3L4 1L9 3L22 16L15 23L3 9z" fill="#fff" stroke="#000" />
								<path d="M4 9L9 4M6 8L16 19M9 6L19 16M14 21L20 15" stroke="#000" fill="none" />
							</g>
						</g>
					</svg>

					<div class="legend">
						<div class="title">
							<svg width="20" height="20" viewBox="0 0 20 20"><circle cx="10" cy="10" r="10" fill="#111" /><path d="M10 4q7 9 0 11q-7-2 0-11" fill="#fff" /></svg>
							<h1>Crude Oil Futures · 3 · MCX · Heikin Ashi</h1>
							<p>O<b>6,255</b></p><p>H<b>6,262</b></p><p>L<b>6,255</b></p><p>C<b>6,259</b></p><p><b>+4 (+0.06%)</b></p>
						</div>
						<div class="trade">
							<button class="sell">6,262<span>SELL</span></button>
							<span class="spread">2</span>
							<button class="buy">6,264<span>BUY</span></button>
						</div>
						<div class="study">
							<span>Rocketalgo 9.0.1 - Future detector</span>
							<button aria-label="Hide">{@render icon('view', 15)}</button>
							<button aria-label="Settings">{@render icon('gear', 15)}</button>
							<button aria-label="Source">{@render icon('code', 15)}</button>
							<button aria-label="Remove">{@render icon('trash', 15)}</button>
							<button aria-label="More">{@render icon('more', 15)}</button>
						</div>
						<button class="collapse" aria-label="Collapse">{@render icon('up', 11)}</button>
					</div>
					<span class="lower-title">Rocketalgo Direction Estimator - V 9.0 - Future detector</span>
					<div class="unit">
						<label><select aria-label="Currency"><option>INR</option></select>{@render icon('down', 8)}</label>
						<label><select aria-label="Unit"><option>BLL</option></select>{@render icon('down', 8)}</label>
					</div>
					<table>
						<tbody>
							<tr><td class="ink">Angle: -46.14°</td><td class="grey">Neutral<span class="face"></span></td></tr>
							<tr><td class="slate">NEUTRAL</td><td class="rose">59.375%</td></tr>
							<tr class="dark"><td class="red">Short Buildup</td><td class="red">Red Zone</td></tr>
							<tr class="dark"><td class="blue">Strong Volume</td><td class="red">66</td></tr>
						</tbody>
					</table>
				</section>

				<div class="bar ranges">
					{#each ranges as r}<button>{r}</button>{/each}
					<i class="rule"></i>
					<button class="goto" aria-label="Go to date">{@render icon('calendar', 20)}</button>
					<div class="right">
						<button>02:41:24 PM UTC+5:30</button>
						<i class="rule"></i>
						<button>B-ADJ</button>
					</div>
				</div>
				<div class="bar panels">
					<button>Stock Screener <span class="caret">{@render icon('down', 9)}</span></button>
					{#each panels as p}<button>{p}</button>{/each}
					<div class="right">
						<button aria-label="Open panel">{@render icon('up', 20)}</button>
						<button aria-label="Maximize panel">{@render icon('full', 17)}</button>
					</div>
				</div>
			</main>

			<aside>
				{#each sideTools as name}
					<button aria-label={name}>{@render icon(name, 24)}{#if name === 'clock'}<span class="badge">99+</span>{/if}</button>
				{/each}
				<button class="bot" aria-label="Assistant"><svg width="24" height="24" viewBox="0 0 24 24"><rect width="24" height="24" rx="3" fill="#62646d" /><path d="M5 6l4 3l-4 3M19 6l-4 3l4 3M10 12h4" fill="none" stroke="#20212a" stroke-width="2" /></svg></button>
				<span class="notice"></span>
				<button class="help" aria-label="Help">{@render icon('help', 25)}</button>
			</aside>
		</div>
	</div>

	<div class="pen">
		<button class="nib" aria-label="Pen menu"><svg width="34" height="34" viewBox="0 0 34 34"><circle cx="17" cy="17" r="17" fill="#000" /><path d="M12 5h10l4 11l-7 14h-1V19a3 3 0 1 0-2 0v11h-1L8 16z" fill="#fff" /></svg></button>
		<div class="palette">
			<button class="on" aria-label="Visibility"><svg viewBox="0 0 24 24"><path d="M1 12Q12 1 23 12Q12 23 1 12z" fill="#fff" /><circle cx="12" cy="12" r="5" fill="#444" /><circle cx="12" cy="12" r="2" fill="#000" /></svg></button>
			<button aria-label="Pointer"><svg viewBox="0 0 24 24"><path d="M2 1l17 10l-7 2l8 8l-3 2l-7-8l-4 6z" fill="#eee" /></svg><i></i></button>
			<button aria-label="Timer"><svg viewBox="0 0 24 24"><circle cx="12" cy="14" r="8" /><circle cx="12" cy="14" r="5" /><path d="M10 1h4v4h-4zM3 22L21 3M12 14l3-3" /></svg><i></i></button>
			<button class="on" aria-label="Pencil"><svg viewBox="0 0 24 24"><path d="M2 2l8 1l12 13l-7 7L3 11z" fill="#fff" /><path d="M3 2l5 1l-4 4z" fill="#222" /><path d="M6 9l10 11M10 5l10 11M13 12l5 5" /></svg><i></i></button>
			<button aria-label="Line"><svg viewBox="0 0 24 24"><path d="M2 4l2-2l18 17l-2 3z" fill="#eee" /></svg><i></i><em></em></button>
			<button aria-label="Eraser"><svg viewBox="0 0 24 24"><path d="M2 7l8-5l12 13l-8 7z" fill="#e6e6e6" /><path d="M5 11l9-6M2 7l3 6" /></svg></button>
			<button aria-label="Size"><svg viewBox="0 0 24 24"><circle cx="12" cy="12" r="8" fill="#222" /></svg></button>
			<button aria-label="Undo"><svg viewBox="0 0 24 24"><path d="M9 2L2 8l7 7v-5h5q4 0 4 4t-5 4v4q9 0 9-8t-9-8H9z" fill="#eee" /></svg></button>
			<button aria-label="Clear"><svg viewBox="0 0 24 24"><path d="M5 8h14v14H5zM4 4h16v4H4zM9 4V2h6v2M9 11v8M15 11v8" fill="#ddd" /></svg></button>
			<button aria-label="Board"><svg viewBox="0 0 24 24"><path d="M3 5h18v12H3zM9 5V2h6v3M8 17l-2 6M16 17l2 6" /><path d="M6 8h12v6H6z" fill="#ccc" /></svg><i></i><em></em></button>
			<button aria-label="Screenshot"><svg viewBox="0 0 24 24"><path d="M2 6h4V3h6v3h10v15H2z" fill="#eee" /><circle cx="10" cy="13" r="5" /><circle cx="10" cy="13" r="2" fill="#222" /><circle cx="19" cy="9" r="1" /></svg></button>
			<button aria-label="Clipboard"><svg viewBox="0 0 24 24"><path d="M4 5h4l4-4l4 4h4v18H4zM7 10h10M7 14h10M7 18h10" fill="#fff" /></svg></button>
			<div class="swatches"><b class="cyan"></b><b class="lemon"></b><b class="pink"></b><b class="black"></b></div>
			<div class="current"></div>
		</div>
	</div>

	<div class="sharing">
		<span class="grip"></span>
		<p>meet.google.com is sharing your screen.</p>
		<button>Stop sharing</button>
		<a href="#hide">Hide</a>
	</div>

	<footer>
		<button class="weather">
			<svg width="26" height="28" viewBox="0 0 26 28"><circle cx="10" cy="17" r="10" fill="#f79a10" /><circle cx="8" cy="14" r="6" fill="#fbb61c" opacity=".6" /><circle cx="18" cy="8" r="8" fill="#c8321f" /><text x="18" y="12" font-size="11" fill="#fff" text-anchor="middle">4</text></svg>
			<span>32°C<br />Sunny</span>
		</button>
		<div class="apps">
			<button aria-label="Start"><svg viewBox="0 0 24 24"><path d="M0 0h11v11H0zM13 0h11v11H13zM0 13h11v11H0zM13 13h11v11H13z" fill="#3cbcfb" /></svg></button>
			<label class="search">
				{@render icon('search', 16)}
				<input type="text" aria-label="Search" placeholder="Search" />
				<svg width="28" height="24" viewBox="0 0 28 24"><path d="M5 9q4-9 12-8q6 1 6 8l-5 4z" fill="#6ba539" /><path d="M2 12l7-4l5 6l-5 9z" fill="#3f7fd6" /><path d="M14 14l8-5l5 5l-6 4z" fill="#2c73c4" /><path d="M11 14l4-5l5 7l-2 6l-4-3l-3 4z" fill="#e9943c" /><path d="M4 16l6 2l-1 4z" fill="#b5d6f5" /></svg>
			</label>
			<button aria-label="Task view"><svg viewBox="0 0 24 24"><path d="M0 7h17v15H0z" fill="#696969" /><path d="M6 1h18v15H6z" fill="#e2e2e2" /></svg></button>
			<button aria-label="Copilot"><svg viewBox="0 0 24 24"><path d="M6 2h8q3 0 4 6l-6 2l-3 9H4q-5 0-3-6z" fill="#1e8be0" /><path d="M6 12l-4 5q1 3 6 3l3-10z" fill="#54bd63" /><path d="M18 5q6 0 5 6l-3 9q-1 3-6 3H9l4-10z" fill="#bf54ce" /><path d="M10 23q3-2 5-9l5 1q-2 8-8 8z" fill="#f38a4e" /></svg></button>
			<button aria-label="Files"><svg viewBox="0 0 24 24"><path d="M0 2h9l2 3h13v18H0z" fill="#f5b92c" /><path d="M0 8h24v15H0z" fill="#ffd65c" /><path d="M4 15h16v8H4z" fill="#1673c8" /><path d="M8 19h8v4H8z" fill="#0d4f93" /></svg></button>
			<button aria-label="Store"><svg viewBox="0 0 24 24"><path d="M7 6V1h10v5" fill="none" stroke="#35a8e0" stroke-width="2" /><rect x="1" y="5" width="22" height="18" rx="3" fill="#f4f4f4" /><path d="M7 9h4v4H7z" fill="#f05322" /><path d="M13 9h4v4h-4z" fill="#7eba2a" /><path d="M7 15h4v4H7z" fill="#33a1df" /><path d="M13 15h4v4h-4z" fill="#fbb72a" /></svg></button>
			<button aria-label="Edge"><svg viewBox="0 0 24 24"><circle cx="12" cy="12" r="12" fill="#1681c8" /><path d="M1 9Q6-2 17 1q8 4 7 13q-3 4-9 1q3-6-3-8T1 9" fill="#3bc9a0" /><path d="M9 11q-3 8 8 10q-12 5-14-6z" fill="#0c59a4" /><rect y="14" width="12" height="9" rx="1" fill="#bd7217" /><path d="M4 14v-2h4v2" fill="none" stroke="#dca14f" /></svg></button>
			<button aria-label="Thunderbird"><svg viewBox="0 0 24 24"><circle cx="12" cy="13" r="11" fill="#1767cf" /><path d="M12 4q9-5 11 0q2 14-8 19q6-8 0-14z" fill="#3fa1f5" /><path d="M6 10l6-4l6 4v4l-6 6l-6-6z" fill="#dbefff" /><path d="M6 10l6 5l6-5l-6-4z" fill="#fff" stroke="#7fb9ef" /></svg></button>
			<button aria-label="Firefox"><svg viewBox="0 0 24 24"><path d="M3 6l3 1q4-5 7-7l2 4q9 2 8 11a11 11 0 0 1-22 0q-1-5 2-9" fill="#ff5b32" /><path d="M15 4q9 5 7 13q-3 5-8 6l-2-12z" fill="#ffbd2b" /><circle cx="12" cy="14" r="6" fill="#8c3bd4" /><path d="M3 8q5 0 8 3l-3 2l4 5q-9 0-9-10" fill="#ff8a2a" /></svg></button>
			<button aria-label="Brave"><svg viewBox="0 0 24 24"><path d="M6 1h12l4 4l-2 13l-8 6l-8-6L2 5z" fill="#fb542b" /><path d="M6 6l4 1h4l4-1l1 6l-4 4l-3 4l-3-4l-4-4z" fill="#fff" /><path d="M7 10l4 1M17 10l-4 1M12 11v4l-3 1h6l-3-1" stroke="#fb542b" fill="none" /></svg></button>
			<button aria-label="Python"><svg viewBox="0 0 24 24"><path d="M2 0h15v23H2z" fill="#eee" /><path d="M1 2h3M1 6h3M1 10h3M1 14h3M1 18h3" stroke="#777" /><path d="M8 10h8v7H9v4H6v-8z" fill="#346f9f" /><path d="M16 13h6v7h-5v3H9v-5h7z" fill="#fbd04b" /></svg></button>
			<button aria-label="Green app"><svg viewBox="0 0 24 24"><path d="M1 1h7q4 3 4 11H6Q0 9 1 1" fill="#48b4a0" /><path d="M23 1v8q-4 3-11 3q-1-10 4-11z" fill="#86cf5a" /><path d="M1 13h11q0 8-4 10H1z" fill="#2fa06b" /><circle cx="18" cy="18" r="6" fill="#1b7fd2" /></svg></button>
			<button class="running" aria-label="Chrome"><svg viewBox="0 0 24 24"><circle cx="12" cy="13" r="11" fill="#2fa252" /><path d="M12 13L2 7Q7 1 14 2h8l1 7z" fill="#e84335" /><path d="M12 13h11q1 9-11 11z" fill="#fac02f" /><circle cx="11" cy="13" r="6" fill="#fff" /><circle cx="11" cy="13" r="5" fill="#3377dd" /><circle cx="19" cy="5" r="5" fill="#eee" /><circle cx="19" cy="5" r="2" fill="#563527" /><path d="M16 9q3-4 6 0" fill="#222" /></svg></button>
			<button aria-label="Rocketalgo"><svg viewBox="0 0 24 24"><path d="M2 14h20M7 12l5-3l5 3" stroke="#821b1b" stroke-width="2" fill="none" /></svg></button>
			<button aria-label="Terminal"><svg viewBox="0 0 24 24"><path d="M0 0h24v24H0z" fill="#080808" /><path d="M9 12l3-4M13 12l3-4" stroke="#dfa92a" stroke-width="2" /><path d="M4 15h16" stroke="#ccc" stroke-width="2" stroke-dasharray="2 1" /></svg></button>
			<button aria-label="Speaker"><svg viewBox="0 0 24 24"><rect x="4" y="1" width="16" height="22" rx="2" fill="#efb919" /><g fill="none" stroke="#2b250d" stroke-width="2"><circle cx="12" cy="15" r="5" /><circle cx="12" cy="6" r="2" /></g><circle cx="12" cy="15" r="2" fill="#2b250d" /></svg></button>
			<button aria-label="Notes"><svg viewBox="0 0 24 24"><rect width="24" height="24" rx="5" fill="#fff" /><path d="M8 5v10" stroke="#ac5bf1" stroke-width="4" stroke-linecap="round" /><circle cx="12" cy="15" r="4" fill="none" stroke="#ef5a9c" stroke-width="4" /></svg></button>
			<button aria-label="Bird"><svg viewBox="0 0 24 24"><path d="M1 5l11 8l1-5l5-2l4-5l-1 9l-3 2v6l-5 3l-3 3l-5-3l3-1l-4-2l3-1l-4-3l3-1z" fill="#f48120" /></svg></button>
			<button aria-label="Teams"><svg viewBox="0 0 24 24"><circle cx="15" cy="4" r="4" fill="#7b83eb" /><circle cx="21" cy="6" r="2" fill="#5059c9" /><path d="M10 8h14v8q-1 6-8 7q-6-1-6-7z" fill="#5c65d2" /><rect y="6" width="13" height="13" rx="1" fill="#3f49ac" /><path d="M3 9h7M7 9v7" stroke="#fff" stroke-width="2" /></svg></button>
			<button aria-label="Player"><svg viewBox="0 0 24 24"><rect width="24" height="24" rx="5" fill="#101820" /><circle cx="12" cy="12" r="8" fill="none" stroke="#45b9d4" stroke-width="2" /><path d="M9 7l12 7l-5 2l-3 5z" fill="#4d76e5" /></svg></button>
			<button class="running" aria-label="Recorder"><svg viewBox="0 0 24 24"><rect width="24" height="24" rx="5" fill="#f3701d" /><circle cx="12" cy="12" r="8" fill="none" stroke="#fff" stroke-width="1" /><path d="M7 9h6v6H7zM14 12l3-3v6z" fill="#fff" /></svg></button>
		</div>
		<div class="tray">
			<button aria-label="Hidden icons">{@render icon('up', 12)}</button>
			<button aria-label="Microphone"><svg width="14" height="18" viewBox="0 0 14 18"><path d="M5 3q0-2 2-2t2 2v6q0 2-2 2t-2-2zM2 8q0 6 5 6t5-6M7 14v3" fill="none" stroke="#79cbd8" /></svg></button>
			<button aria-label="Network and sound"><svg width="42" height="18" viewBox="0 0 42 18"><path d="M10 1H1v11h13V8M7 12v3M3 16h9M12 1h4v5h-4zM14 6v8M24 6h3l5-4v14l-5-4h-3zM35 6q2 3 0 6M37 3q4 6 0 12" fill="none" stroke="#eee" /></svg></button>
			<div class="clock">2:41 PM<br />2/4/2025</div>
			<button aria-label="Notifications"><svg width="16" height="16" viewBox="0 0 16 16"><path d="M2 13q2-1 2-7q1-4 5-3v6h5l1 4zM6 14h4l-2 2z" fill="#eee" /><path d="M11 1h4l-3 4h4M8 5h3l-3 3h3" fill="none" stroke="#eee" /></svg></button>
		</div>
	</footer>
</div>

<style>
	:global(body) { margin: 0; background: #181818; }
	.screen {
		--tv: Roboto, "Open Sans", sans-serif;
		--win: "Open Sans", "Noto Sans", sans-serif;
		position: relative;
		display: flex;
		flex-direction: column;
		min-height: 100vh;
		font-family: var(--tv);
		overflow: hidden;
	}
	button {
		display: flex;
		align-items: center;
		gap: 5px;
		border: 0;
		padding: 0;
		background: none;
		color: inherit;
		font: inherit;
	}
	p, h1 { margin: 0; font-weight: 400; }
	.icon { fill: none; stroke: currentColor; stroke-width: 1.4; flex: none; }
	.faded { opacity: 0.4; }

	/* browser frame */
	.chrome { position: relative; height: 87px; background: #f8f9ff; color: #333; font: 12px var(--win); }
	.tabs { display: flex; align-items: center; height: 40px; padding-left: 6px; background: #dde0ea; }
	.tabs .icon, .nav .icon { stroke-width: 2.4; }
	.tab-menu { width: 28px; height: 28px; justify-content: center; border-radius: 9px; background: #f8f9ff; }
	.tab {
		display: flex;
		align-items: center;
		gap: 8px;
		align-self: flex-end;
		box-sizing: border-box;
		width: 232px;
		height: 34px;
		margin-left: 6px;
		padding: 0 10px 6px 8px;
		border-radius: 10px 10px 0 0;
		background: #f8f9ff;
	}
	.tab-title { flex: 1; overflow: hidden; font-family: var(--tv); white-space: nowrap; mask-image: linear-gradient(90deg, #000 85%, transparent); }
	.new-tab { margin-left: 13px; }
	.window-x { margin: 0 17px 6px auto; opacity: 0.6; }
	.nav { display: flex; align-items: center; gap: 20px; height: 46px; padding: 0 13px 0 14px; }
	.omnibox {
		display: flex;
		align-items: center;
		flex: 1;
		height: 34px;
		border-radius: 17px;
		background: #e4e6f1;
	}
	.omnibox input { flex: 1; border: 0; padding: 0; background: none; color: #30323a; font: 13px var(--win); }
	.omnibox button { margin-right: 16px; }
	.site { display: flex; align-items: center; justify-content: center; width: 26px; height: 26px; margin: 0 6px 0 3px; border-radius: 50%; background: #f8f9ff; }
	.extensions { display: flex; gap: 18px; margin-left: -3px; }
	.extensions button:nth-child(7) { margin-left: 18px; }
	.recorder {
		position: absolute;
		z-index: 2;
		top: 17px;
		right: 13px;
		display: flex;
		align-items: center;
		box-sizing: border-box;
		width: 141px;
		height: 40px;
		border: 1px solid #f08c28;
		border-radius: 20px;
		background: linear-gradient(#fff, #ffe3d2);
		color: #c9352d;
		font: 13px var(--tv);
	}
	.recorder button { justify-content: center; width: 50px; height: 50px; margin: 0 18px 0 -2px; border: 1px solid #f08c28; border-radius: 50%; background: linear-gradient(#fff, #f5f0ee); }
	.recorder span { width: 20px; height: 20px; border-radius: 4px; background: linear-gradient(#ff5b4c, #dc2618); }

	/* trading app */
	.tv { display: flex; flex-direction: column; flex: 1; gap: 4px; background: #2e2e2e; color: #d5d5d5; font-size: 14px; }
	.bar { display: flex; align-items: center; flex: none; height: 38px; background: #181818; }
	.right { display: flex; align-items: center; margin-left: auto; }
	.strong { font-weight: 500; }
	.active { color: #2962ff; }
	.rule { width: 1px; height: 22px; background: #454545; }
	.wide { padding: 0 13px; }
	.studies { margin-left: 2px; }
	.more { margin-left: 4px; }
	.logo { position: relative; margin: 0 23px 0 13px; }
	.badge {
		position: absolute;
		top: -4px;
		right: -10px;
		padding: 0 4px;
		border-radius: 9px;
		background: #f7423e;
		color: #fff;
		font: 700 11px/17px var(--tv);
	}
	.symbol { gap: 4px; width: 97px; }
	.symbol .icon { stroke-width: 2; }
	.compare { margin-right: 12px; }
	.intervals { display: flex; gap: 11px; padding: 0 9px 0 12px; }
	.name { flex-direction: column; gap: 0; line-height: 15px; }
	.name small { color: #2962ff; font-size: 11px; line-height: 10px; font-weight: 400; }
	.top .right { gap: 16px; padding-right: 5px; }
	.layout { display: flex; gap: 12px; margin-right: -8px; }
	.top .right .rule { margin-right: -3px; }
	.publish { height: 28px; padding: 0 11px; border-radius: 14px; background: #f2f2f2; color: #111; font-weight: 500; margin-left: -4px; }

	.workspace { display: flex; flex: 1; gap: 4px; }
	.draw { width: 52px; padding-top: 6px; background: #181818; }
	.draw button { width: 52px; height: 36px; justify-content: center; }
	.draw hr { width: 36px; margin: 6px 8px; border: 0; border-top: 1px solid #454545; }
	main { display: flex; flex-direction: column; flex: 1; min-width: 0; gap: 4px; }
	.chart { position: relative; flex: 1; overflow: hidden; border-radius: 4px 4px 0 0; background: #000; }
	.chart + .bar { margin-top: -3px; }
	.plot { position: absolute; inset: 0; font-family: var(--tv); }
	.under { fill: none; stroke: #060f2a; stroke-width: 8; }
	.zone { fill: rgba(130, 134, 145, 0.14); stroke: #5b5e66; }
	.dash { fill: none; stroke: #a9751d; stroke-dasharray: 2 1; }
	.tag { fill: #fff; font-weight: 500; text-anchor: middle; font-size: 11px; }
	.large { font-size: 14px; }
	.medium { font-size: 12px; }
	.small { font-size: 10px; }
	.note { font-size: 9px; }
	.product { font-size: 8px; }
	.tiny { font-size: 7px; }
	.target { fill: #fff; font-size: 12px; font-weight: 500; }
	.zone-text { font-size: 8px; text-anchor: middle; }
	.rev { fill: #fff; font-size: 12px; text-anchor: middle; }
	.up { fill: #0c4030; }
	.axis { fill: #b4b4b4; font-size: 13px; }
	.now { fill: #fff; font-weight: 500; }
	.left { fill: #c4efe9; }

	.legend { position: absolute; top: 5px; left: 4px; }
	.title { display: flex; align-items: center; height: 23px; gap: 5px; padding-left: 4px; color: #c0c0c0; font-size: 13px; }
	.title h1 { margin: 0 2px 0 -2px; font-size: 16px; }
	.title b { color: #1c8f7d; font-weight: 400; }
	.trade { display: flex; align-items: center; gap: 7px; height: 34px; margin: 4px 4px; font-size: 13px; }
	.trade button { flex-direction: column; gap: 0; justify-content: center; box-sizing: border-box; width: 55px; height: 34px; border-radius: 5px; background: rgba(8, 8, 10, 0.85); line-height: 14px; }
	.trade button span { font-size: 12px; }
	.sell { border: 1px solid #e0413f; color: #f7423e; }
	.buy { border: 1px solid #2a52c4; color: #2f62f0; }
	.spread { color: #eee; font-size: 12px; }
	.study { display: flex; align-items: center; gap: 13px; height: 22px; width: 336px; padding: 0 10px 0 4px; border: 1px solid #1f49b8; border-radius: 3px; background: #0e0f12; color: #b8b8b8; font: 13px var(--win); }
	.study span { flex: 1; white-space: nowrap; }
	.study .icon, .collapse .icon { stroke-width: 2; }
	.collapse { justify-content: center; width: 28px; height: 21px; margin: 3px 0 0 6px; border: 1px solid #333; border-radius: 3px; background: #0a0a0a; }
	.lower-title { position: absolute; top: 463px; left: 9px; color: #a6a6a6; font: 13px var(--win); }
	.unit { position: absolute; top: 4px; right: 4px; width: 45px; border: 1px solid #434343; border-radius: 3px; background: #0b0b0b; }
	.unit label { display: flex; align-items: center; height: 24px; padding: 0 4px; }
	.unit select { flex: 1; min-width: 0; appearance: none; border: 0; padding: 0; background: none; color: #ccc; font: 12px var(--tv); }
	.unit .icon { stroke-width: 4; }
	table { position: absolute; right: 64px; bottom: 37px; border-spacing: 1px 1px; table-layout: fixed; width: 108px; color: #fff; font-size: 8px; font-weight: 500; text-align: center; }
	td { height: 16px; padding: 0; white-space: nowrap; }
	td:first-child { width: 60px; }
	.dark { color: #74282d; }
	.ink { background: #2b2e39; }
	.grey { background: #686b74; }
	.slate { background: #568597; }
	.rose { background: #c96a67; }
	.red { background: #ff4848; }
	.blue { background: #2f86dc; color: #153e6c; }
	.face { display: inline-block; width: 8px; height: 8px; margin-left: 1px; border-radius: 50%; background: #e2a13d; vertical-align: middle; }

	.ranges { gap: 10px; padding: 0 9px 0 14px; }
	.ranges .right { gap: 10px; }
	.goto { margin-left: 4px; }
	.panels { gap: 33px; padding: 0 10px 0 15px; border-radius: 4px; }
	.panels .right { gap: 18px; }
	.caret { display: flex; margin: 0 -7px 0 6px; }
	aside { position: relative; width: 44px; padding-top: 1px; background: #181818; }
	aside button { position: relative; width: 44px; height: 46px; justify-content: center; }
	aside .badge { top: 4px; right: 3px; font-weight: 500; }
	.bot { margin-top: 41px; opacity: 0.75; }
	.notice { position: absolute; right: 4px; bottom: 72px; width: 16px; height: 16px; border-radius: 50%; background: #f7423e; }
	.help { position: absolute; bottom: 1px; left: 0; }

	/* floating drawing palette */
	.pen { position: absolute; top: 532px; right: 10px; width: 34px; }
	.palette { margin: 6px 0 0 1px; padding: 2px; background: #fff; }
	.palette button { position: relative; width: 100%; height: 30px; justify-content: center; }
	.palette svg { width: 25px; height: 25px; fill: none; stroke: #333; stroke-width: 1.4; }
	.palette .on { background: #29abe8; }
	.palette i { position: absolute; right: 0; bottom: 0; border: solid transparent; border-width: 0 0 7px 7px; border-bottom-color: #222; }
	.palette em { position: absolute; top: 2px; right: 0; width: 8px; height: 8px; border-radius: 50%; background: #ff2f92; }
	.swatches { display: grid; grid-template-columns: 1fr 1fr; }
	.swatches b { height: 15px; }
	.cyan { background: #00a2ed; }
	.lemon, .current { background: #ffe600; }
	.pink { background: #ff2f92; }
	.black { background: #000; }
	.current { height: 30px; }

	.sharing {
		position: absolute;
		bottom: 56px;
		left: 50%;
		display: flex;
		align-items: center;
		gap: 11px;
		box-sizing: border-box;
		width: 403px;
		height: 50px;
		margin-left: -202px;
		padding: 0 11px;
		background: #f3f3f3;
		color: #202124;
		font: 12px var(--win);
		white-space: nowrap;
	}
	.sharing p { flex: 1; font-family: var(--tv); }
	.grip { flex: none; width: 2px; height: 10px; border: solid #aaa; border-width: 0 1px; }
	.sharing button { height: 38px; padding: 0 15px; border-radius: 19px; background: #0b57d0; color: #fff; font-weight: 600; }
	.sharing a { color: #2c5fae; }

	/* taskbar */
	footer { display: grid; grid-template-columns: 1fr auto 1fr; align-items: center; height: 49px; padding-bottom: 2px; border-top: 2px solid #333; box-sizing: border-box; background: #1c1c1c; color: #f1f1f1; font: 12px/16px var(--win); }
	.weather { gap: 4px; margin-left: 20px; text-align: left; }
	.apps { display: flex; align-items: center; gap: 20px; margin-left: 2px; }
	.apps button { position: relative; }
	.apps button svg { width: 24px; height: 24px; }
	.running::after { content: ''; position: absolute; bottom: -7px; left: 9px; width: 6px; height: 3px; border-radius: 2px; background: #aaa; }
	.search { display: flex; align-items: center; box-sizing: border-box; width: 218px; height: 30px; margin: 0 -7px; padding: 0 13px 0 11px; border-radius: 15px; background: #f2f2f2; color: #222; }
	.search .icon { stroke-width: 2.4; }
	.search input { flex: 1; min-width: 0; margin-left: 9px; border: 0; padding: 0; background: none; font: 13px var(--win); }
	.search input::placeholder { color: #666; opacity: 1; }
	.tray { display: flex; align-items: center; justify-content: flex-end; gap: 17px; padding-right: 19px; }
	.tray .icon { stroke-width: 3; }
	.clock { margin-right: -9px; text-align: right; }
</style>
